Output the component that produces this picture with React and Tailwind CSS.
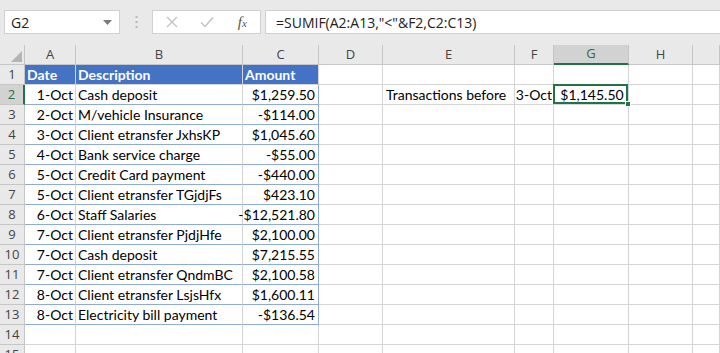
import React from "react";

const W = [25, 51, 167, 76, 64, 132, 39, 75, 64, 27];
const LETTERS = ["", "A", "B", "C", "D", "E", "F", "G", "H", ""];

const DATA = [
  ["1-Oct", "Cash deposit", "$1,259.50"],
  ["2-Oct", "M/vehicle Insurance", "-$114.00"],
  ["3-Oct", "Client etransfer JxhsKP", "$1,045.60"],
  ["4-Oct", "Bank service charge", "-$55.00"],
  ["5-Oct", "Credit Card payment", "-$440.00"],
  ["5-Oct", "Client etransfer TGjdjFs", "$423.10"],
  ["6-Oct", "Staff Salaries", "-$12,521.80"],
  ["7-Oct", "Client etransfer PjdjHfe", "$2,100.00"],
  ["7-Oct", "Cash deposit", "$7,215.55"],
  ["7-Oct", "Client etransfer QndmBC", "$2,100.58"],
  ["8-Oct", "Client etransfer LsjsHfx", "$1,600.11"],
  ["8-Oct", "Electricity bill payment", "-$136.54"],
];

const cellFont = { fontFamily: "Lato, 'Open Sans', sans-serif" };

function RowHeader({ n, selected }) {
  return (
    <div
      className={`shrink-0 h-full flex items-center justify-center border-b border-r text-[13px] ${
        selected
          ? "bg-[#d2d2d2] border-r-2 border-r-[#217346] border-b-[#c6c6c6] text-[#217346]"
          : "bg-[#e9e9e9] border-[#c6c6c6] text-[#444]"
      }`}
      style={{ width: W[0], fontFamily: "'Open Sans', sans-serif" }}
    >
      {n}
    </div>
  );
}

function Cell({ i, children, className = "" }) {
  return (
    <div
      className={`shrink-0 h-full flex items-center overflow-visible whitespace-nowrap border-b border-r border-[#d4d4d4] ${className}`}
      style={{ width: W[i] }}
    >
      {children}
    </div>
  );
}

export default function App() {
  return (
    <div
      className="w-[720px] h-[353px] overflow-hidden bg-white text-black relative"
      style={cellFont}
    >
      {/* Formula bar band */}
      <div className="h-[45px] bg-[#e9e9e9] flex items-start pt-[10px]">
        <div className="ml-[4px] w-[116px] h-[24px] bg-white border border-[#d0d0d0] flex items-center justify-between pl-[6px] pr-[7px]">
          <span className="text-[14px] text-[#222]" style={{ fontFamily: "'Open Sans', sans-serif" }}>
            G2
          </span>
          <svg width="9" height="5" viewBox="0 0 9 5">
            <path d="M0 0 L9 0 L4.5 5 Z" fill="#7a7a7a" />
          </svg>
        </div>
        <div className="w-[32px] h-[24px] flex items-center justify-center">
          <svg width="3" height="12" viewBox="0 0 3 12">
            <rect x="0.5" y="0" width="2" height="2" fill="#b8b8b8" />
            <rect x="0.5" y="5" width="2" height="2" fill="#b8b8b8" />
            <rect x="0.5" y="10" width="2" height="2" fill="#b8b8b8" />
          </svg>
        </div>
        <div className="w-[109px] h-[24px] bg-white border border-[#d0d0d0] flex items-center">
          <div className="w-[36px] flex justify-center ml-[1px]">
            <svg width="12" height="12" viewBox="0 0 12 12">
              <path d="M1 1 L11 11 M11 1 L1 11" stroke="#c2c2c2" strokeWidth="1.3" />
            </svg>
          </div>
          <div className="w-[36px] flex justify-center">
            <svg width="14" height="12" viewBox="0 0 14 12">
              <path d="M1 6.5 L5 10.5 L13 1.5" stroke="#c2c2c2" strokeWidth="1.5" fill="none" />
            </svg>
          </div>
          <div className="w-[36px] flex justify-center">
            <span
              className="italic text-[15px] text-[#555] leading-none"
              style={{ fontFamily: "'Liberation Serif', serif" }}
            >
              f<span className="text-[11px]">x</span>
            </span>
          </div>
        </div>
        <div className="ml-[4px] flex-1 h-[24px] bg-white border border-[#d0d0d0] border-r-0 flex items-center pl-[10px]">
          <span className="text-[14px] text-[#222]" style={{ fontFamily: "'Open Sans', sans-serif" }}>
            =SUMIF(A2:A13,"&lt;"&amp;F2,C2:C13)
          </span>
        </div>
      </div>

      {/* Column headers */}
      <div className="h-[20px] flex" style={{ fontFamily: "'Open Sans', sans-serif" }}>
        <div
          className="shrink-0 h-full bg-[#e9e9e9] border-b border-r border-[#c6c6c6] flex items-end justify-end p-[2px]"
          style={{ width: W[0] }}
        >
          <svg width="11" height="11" viewBox="0 0 11 11">
            <path d="M11 0 L11 11 L0 11 Z" fill="#b4b4b4" />
          </svg>
        </div>
        {LETTERS.slice(1).map((l, k) => {
          const i = k + 1;
          const sel = l === "G";
          return (
            <div
              key={i}
              className={`shrink-0 h-full flex items-center justify-center text-[13px] border-r ${
                sel
                  ? "bg-[#d2d2d2] text-[#217346] border-b-2 border-b-[#217346] border-r-[#c6c6c6]"
                  : "bg-[#e9e9e9] text-[#444] border-b border-[#c6c6c6]"
              }`}
              style={{ width: W[i] }}
            >
              {l}
            </div>
          );
        })}
      </div>

      {/* Row 1 */}
      <div className="h-[20px] flex">
        <RowHeader n={1} />
        <Cell i={1} className="bg-[#4472c4] border-[#4472c4] text-white font-bold text-[14px] pl-[2px]">
          Date
        </Cell>
        <Cell i={2} className="bg-[#4472c4] border-[#4472c4] text-white font-bold text-[14px] pl-[2px]">
          Description
        </Cell>
        <Cell i={3} className="bg-[#4472c4] border-[#4472c4] text-white font-bold text-[14px] pl-[2px]">
          Amount
        </Cell>
        {[4, 5, 6, 7, 8, 9].map((i) => (
          <Cell key={i} i={i} />
        ))}
      </div>

      {/* Data rows */}
      {DATA.map((r, idx) => {
        const n = idx + 2;
        return (
          <div key={n} className="h-[20px] flex text-[14px]">
            <RowHeader n={n} selected={n === 2} />
            <Cell i={1} className="justify-end pr-[2px] border-b-[#8ea9db]">
              {r[0]}
            </Cell>
            <Cell i={2} className="pl-[2px] border-b-[#8ea9db]">
              {r[1]}
            </Cell>
            <Cell i={3} className="justify-end pr-[3px] border-b-[#8ea9db] border-r-[#8ea9db]">
              {r[2]}
            </Cell>
            <Cell i={4} />
            {n === 2 ? (
              <>
                <Cell i={5} className="pl-[3px]">Transactions before</Cell>
                <Cell i={6} className="justify-end pr-[1px]">3-Oct</Cell>
                <Cell i={7} className="relative justify-center pl-[2px]">
                  <span>$1,145.50</span>
                  <div className="absolute -left-[1px] -top-[1px] right-0 bottom-0 border-2 border-[#217346] pointer-events-none" />
                  <div className="absolute -right-[3px] -bottom-[3px] w-[6px] h-[6px] bg-[#217346] border border-white" />
                </Cell>
              </>
            ) : (
              <>
                <Cell i={5} />
                <Cell i={6} />
                <Cell i={7} />
              </>
            )}
            <Cell i={8} />
            <Cell i={9} />
          </div>
        );
      })}

      {/* Empty rows */}
      {[14, 15].map((n) => (
        <div key={n} className="h-[20px] flex">
          <RowHeader n={n} />
          {[1, 2, 3, 4, 5, 6, 7, 8, 9].map((i) => (
            <Cell key={i} i={i} />
          ))}
        </div>
      ))}
    </div>
  );
}
